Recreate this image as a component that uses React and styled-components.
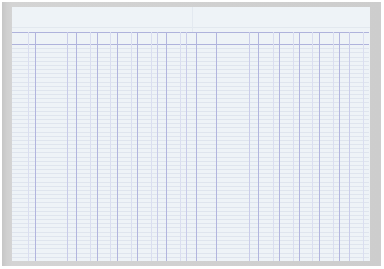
import * as React from 'react'
import styled, { createGlobalStyle } from 'styled-components'

const Global = createGlobalStyle`
  html, body {
    margin: 0;
    padding: 0;
    background: #ffffff;
  }
`

const lineColors = {
  strong: '#b2b5de',
  medium: '#c9cce9',
  faint: '#dadef0',
  none: 'transparent',
}

const Frame = styled.div`
  margin: 2px 0 0 2px;
  width: 379px;
  height: 264px;
  box-sizing: border-box;
  padding: 5px 11px 5px 10px;
  background: linear-gradient(to right, #c6c6c6 0, #d0d0d0 5px, #d4d4d4 10px, #cdcdcd 100%);
`

const Page = styled.div`
  width: 358px;
  height: 254px;
  background: #eef3f7;
  display: flex;
  flex-direction: column;
`

const Header = styled.div`
  height: 25px;
  display: flex;
  background: linear-gradient(to bottom, transparent 0, transparent 20px, #e2e8ef 20px, #e2e8ef 21px, transparent 21px);
`

const HeaderHalf = styled.div`
  width: ${(p) => p.$width}px;
  flex: ${(p) => (p.$width ? 'none' : '1')};
  border-right: ${(p) => (p.$fold ? '1px solid #e3e9f0' : 'none')};
  box-sizing: border-box;
`

const Table = styled.div`
  flex: 1;
  display: flex;
`

const Column = styled.div`
  width: ${(p) => p.$width}px;
  flex: none;
  box-sizing: border-box;
  border-right: 1px solid ${(p) => lineColors[p.$line]};
  display: flex;
  flex-direction: column;
`

const ColHead = styled.div`
  height: 13px;
  box-sizing: border-box;
  border-top: 1px solid #afb3dc;
  border-bottom: 1px solid #afb3dc;
`

const ColBody = styled.div`
  flex: 1;
  background: repeating-linear-gradient(
    to bottom,
    transparent 0,
    transparent 3.17px,
    #dfe5ee 3.17px,
    #dfe5ee 4.17px
  );
`

const lines = [
  [16, 'faint'], [23, 'strong'], [55, 'medium'], [64, 'strong'], [78, 'faint'],
  [85, 'strong'], [98, 'faint'], [105, 'strong'], [119, 'faint'], [125, 'strong'],
  [139, 'faint'], [145, 'medium'], [154, 'strong'], [168, 'faint'], [174, 'medium'],
  [184, 'strong'], [204, 'strong'], [237, 'medium'], [246, 'strong'], [261, 'faint'],
  [267, 'strong'], [281, 'faint'], [287, 'strong'], [300, 'faint'], [307, 'strong'],
  [321, 'faint'], [327, 'strong'], [337, 'medium'], [351, 'faint'], [357, 'none'],
]

const columns = lines.map(([pos, line], i) => {
  const prev = i === 0 ? -1 : lines[i - 1][0]
  return { width: pos - prev, line }
})

const App = () => {
  return (
    <>
      <Global />
      <Frame>
        <Page>
          <Header>
            <HeaderHalf $width={181} $fold />
            <HeaderHalf />
          </Header>
          <Table>
            {columns.map((c, i) => (
              <Column key={i} $width={c.width} $line={c.line}>
                <ColHead />
                <ColBody />
              </Column>
            ))}
          </Table>
        </Page>
      </Frame>
    </>
  )
}

export default App
